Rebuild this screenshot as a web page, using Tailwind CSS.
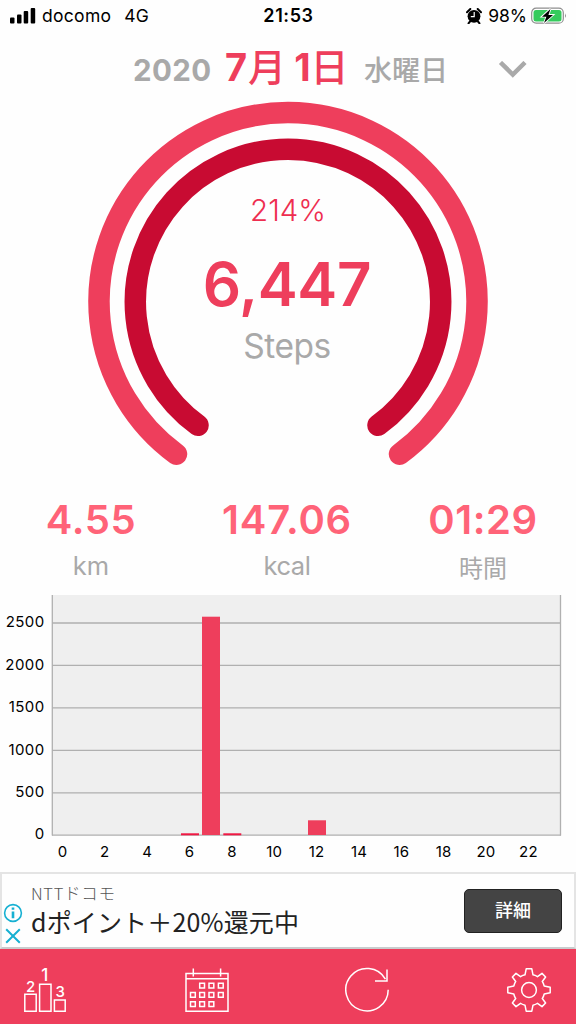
<!DOCTYPE html>
<html lang="ja">
<head>
    <meta charset="UTF-8">
    <meta name="viewport" content="width=device-width, initial-scale=1.0">
    <title>歩数計</title>
    <script src="https://cdn.jsdelivr.net/npm/@tailwindcss/browser@4"></script>
    <style> body { font-family: Inter, 'Noto Sans CJK JP', sans-serif; } </style>
</head>
<body class="w-[576px] h-[1024px] bg-[#fefefe] flex flex-col overflow-hidden whitespace-nowrap">
    <!-- status bar -->
    <div class="h-8 shrink-0 grid grid-cols-3 items-center pl-[10px] pr-[9px] text-[17.5px] leading-8 text-black">
        <div class="flex items-center">
            <svg class="w-[26px] h-4 mr-[6px]" viewBox="0 0 26 16" fill="#000">
                <rect x="0" y="9.5" width="4.5" height="6" rx="1"/>
                <rect x="7" y="6.5" width="4.5" height="9" rx="1"/>
                <rect x="13.7" y="3" width="4.5" height="12.5" rx="1"/>
                <rect x="20.7" y="0" width="4.5" height="15.5" rx="1"/>
            </svg>
            <span class="tracking-[0.3px]">docomo</span>
            <span class="ml-[13px] tracking-[0.2px]">4G</span>
        </div>
        <div class="text-center font-semibold text-[18px] tracking-[0.6px]">21:53</div>
        <div class="flex items-center justify-end">
            <svg class="w-4 h-4 mr-[6px]" viewBox="0 0 16 16">
                <circle cx="8" cy="8.3" r="6.4" fill="#000"/>
                <path d="M1 4.3 4.3 1M15 4.3 11.7 1M4 13.5l-1.5 1.8M12 13.5l1.5 1.8" stroke="#000" stroke-width="2" stroke-linecap="round"/>
                <path d="M8.2 4v4.7H4.8" fill="none" stroke="#fff" stroke-width="1.2"/>
            </svg>
            <span class="mr-1">98%</span>
            <svg class="w-9 h-[18px]" viewBox="0 0 36 18">
                <rect x=".7" y="1.2" width="31.6" height="15" rx="4.5" fill="#fff" stroke="#8e8e8e" stroke-width="1.2"/>
                <rect x="2.5" y="3" width="28" height="11.4" rx="2.5" fill="#35cb5d"/>
                <path d="M34 6.3q1.8 2.3 0 4.8z" fill="#8e8e8e"/>
                <path d="M19.5 2 11 9.7h4.4L13 16l9-8h-4.6z" fill="#000" stroke="#fff" stroke-width="1.8" paint-order="stroke"/>
            </svg>
        </div>
    </div>

    <!-- date -->
    <div class="h-[68px] shrink-0 flex items-baseline pl-[133px] font-bold text-[#a9a9a9] leading-[71px]">
        <span class="w-[92px] text-[29.5px] tracking-[0.4px]">2020</span>
        <span class="w-[139px] text-[38px] text-[#ee3e5c]">7<span class="ml-px font-medium">月</span> <span class="-ml-px">1</span><span class="font-medium">日</span></span>
        <span class="w-[134px] text-[28px] font-medium">水曜日</span>
        <svg class="w-[30px] h-[20px]" viewBox="0 0 30 20" fill="none" stroke="#a9a9a9" stroke-width="4.5">
            <path d="M2.5 1.5 14.8 13.5 27 1.5"/>
        </svg>
    </div>

    <!-- progress rings -->
    <div class="h-[390px] shrink-0 grid justify-items-center">
        <svg class="col-start-1 row-start-1 w-[420px] h-[380px]" viewBox="0 0 420 380" fill="none" stroke-width="21.5" stroke-linecap="round">
            <path d="M98.5 354.2A189 189 0 1 1 321.5 354.2" stroke="#ee3e5c"/>
            <path d="M120 325.3A152.7 152.7 0 1 1 300 325.3" stroke="#c80b32"/>
        </svg>
        <div class="col-start-1 row-start-1 flex flex-col items-center pt-[90px]">
            <div class="h-10 leading-10 text-[29.5px] font-light text-[#ee2e50]">214%</div>
            <div class="h-[72px] mt-[18px] leading-[72px] text-[60px] font-semibold text-[#ee3e5c] tracking-[-0.3px] -translate-x-px">6,447</div>
            <div class="h-[52px] leading-[52px] text-[33.5px] text-[#a9a9a9] tracking-[-0.5px] -translate-x-px">Steps</div>
        </div>
    </div>

    <!-- totals -->
    <div class="h-[105px] shrink-0 flex justify-center text-center pr-[2px]">
        <div class="w-[196px] shrink-0 pt-[6px]">
            <div class="h-12 leading-[48px] text-[40px] font-semibold text-[#ff6378] tracking-[0.6px]">4.55</div>
            <div class="h-11 leading-[44px] text-[25.5px] text-[#a9a9a9]">km</div>
        </div>
        <div class="w-[196px] shrink-0 pt-[6px]">
            <div class="h-12 leading-[48px] text-[40px] font-semibold text-[#ff6378] tracking-[0.8px]">147.06</div>
            <div class="h-11 leading-[44px] text-[25.5px] text-[#a9a9a9] tracking-[-0.4px]">kcal</div>
        </div>
        <div class="w-[196px] shrink-0 pt-[6px]">
            <div class="h-12 leading-[48px] text-[40px] font-semibold text-[#ff6378] tracking-[0.6px]">01:29</div>
            <div class="h-11 leading-[46px] text-[24px] text-[#a9a9a9] font-['Noto_Sans_CJK_JP']">時間</div>
        </div>
    </div>

    <!-- steps per hour -->
    <svg class="w-[576px] h-[277px] shrink-0" viewBox="0 0 576 277">
        <rect x="52" y="0" width="509" height="240" fill="#efefef"/>
        <path d="M52 28h509M52 70.4h509M52 112.8h509M52 155.4h509M52 197.8h509M52 240.2h509" stroke="#b0b0b0" stroke-width="1.3"/>
        <path d="M52.3 0v240.5M560.5 0v240.5" stroke="#b0b0b0" stroke-width="1.3"/>
        <g fill="#ee3e5c">
            <rect x="202" y="21.7" width="18" height="218.3"/>
            <rect x="308" y="225.3" width="18" height="14.7"/>
        </g>
        <g fill="#f01843">
            <rect x="181" y="238.3" width="18" height="2"/>
            <rect x="223.3" y="238.3" width="18" height="2"/>
        </g>
        <g font-size="15" letter-spacing="0.4" text-anchor="end" fill="#000">
            <text x="44.5" y="32">2500</text>
            <text x="44.5" y="74.5">2000</text>
            <text x="44.5" y="117">1500</text>
            <text x="44.5" y="159.5">1000</text>
            <text x="44.5" y="202">500</text>
            <text x="44.5" y="244.2">0</text>
        </g>
        <g font-size="15" letter-spacing="0.2" text-anchor="middle" fill="#000">
            <text x="62.5" y="262">0</text>
            <text x="104.8" y="262">2</text>
            <text x="147.2" y="262">4</text>
            <text x="189.5" y="262">6</text>
            <text x="231.9" y="262">8</text>
            <text x="274.3" y="262">10</text>
            <text x="316.6" y="262">12</text>
            <text x="359" y="262">14</text>
            <text x="401.3" y="262">16</text>
            <text x="443.7" y="262">18</text>
            <text x="486" y="262">20</text>
            <text x="528.4" y="262">22</text>
        </g>
    </svg>

    <!-- ad banner -->
    <div class="h-[77px] shrink-0 flex items-center border-2 border-b-[#c9cccd] border-[#e4e4e4] bg-[#fefefe] pl-[1px] pr-3">
        <svg class="w-5 h-[44px] mt-[28px]" viewBox="0 0 20 44" fill="none" stroke="#16b0d2" stroke-width="1.6">
            <circle cx="10" cy="10" r="8.4"/>
            <path d="M10 8.5v6.8M10 4.6v2.2" stroke-width="2.6"/>
            <path d="m3.2 26.2 13.6 13.6m0-13.6L3.2 39.8" stroke-width="2"/>
        </svg>
        <div class="ml-2 flex-1 -mt-[2px] font-['Noto_Sans_CJK_JP']">
            <div class="h-[22px] leading-[22px] text-[16.5px] font-light text-[#555] tracking-[0.7px]">NTTドコモ</div>
            <div class="h-[34px] leading-[34px] text-[25px] text-[#222] tracking-[0.15px]">dポイント＋20%還元中</div>
        </div>
        <div class="w-[98px] h-11 rounded-[5px] bg-[#444] border border-[#222] text-white text-[18px] font-medium leading-[41px] text-center">詳細</div>
    </div>

    <!-- tab bar -->
    <div class="h-[75px] shrink-0 flex items-center bg-[#ee3e5c] pl-[23px] pt-[7px]">
        <svg class="w-11 h-[46px] overflow-visible" viewBox="0 0 44 46" fill="none" stroke="#fff" stroke-width="1.5">
            <path d="M1.8 27.2h11.4v17H1.8zM16.6 17.3h11.4v26.9H16.6zM31.4 32.9h10.8v11.3H31.4z"/>
            <g fill="#fff" stroke="none" font-size="15" font-weight="500" text-anchor="middle">
                <text x="7.5" y="24.6">2</text>
                <text x="21.7" y="14.3" font-size="17">1</text>
                <text x="37.3" y="30.3">3</text>
            </g>
        </svg>
        <svg class="w-11 h-[46px] ml-[118px]" viewBox="0 0 44 46" fill="none" stroke="#fff" stroke-width="1.5">
            <path d="M1 6.6h42v37.6H1zM1 11.7h42M8.3 1.5v8M35.6 1.5v8"/>
            <path d="M14.7 16.3h4.8v4.8h-4.8zM24 16.3h4.8v4.8H24zM33.4 16.3h4.8v4.8h-4.8zM5.5 25.5h4.8v4.8H5.5zM14.7 25.5h4.8v4.8h-4.8zM24 25.5h4.8v4.8H24zM33.4 25.5h4.8v4.8h-4.8zM5.5 34.7h4.8v4.8H5.5zM14.7 34.7h4.8v4.8h-4.8zM24 34.7h4.8v4.8H24z"/>
        </svg>
        <svg class="w-11 h-[46px] ml-[116px]" viewBox="0 0 44 46" fill="none" stroke="#fff" stroke-width="1.5">
            <path d="M43.2 22.8A21.2 21.2 0 1 1 40.4 12.2"/>
            <path d="M42 2.5v11.6H30"/>
        </svg>
        <svg class="w-[46px] h-[46px] ml-[117px]" viewBox="-23 -23 46 46" fill="none" stroke="#fff" stroke-width="1.5" stroke-linejoin="round">
            <circle r="7.4"/>
            <path d="M-2.8-21.2H2.8L4-15.2Q7.2-14.4 8.5-13.3L13-16.6 16.6-13 13.3-8.5Q14.4-7.2 15.2-4L21.2-2.8V2.8L15.2 4Q14.4 7.2 13.3 8.5L16.6 13 13 16.6 8.5 13.3Q7.2 14.4 4 15.2L2.8 21.2H-2.8L-4 15.2Q-7.2 14.4-8.5 13.3L-13 16.6-16.6 13-13.3 8.5Q-14.4 7.2-15.2 4L-21.2 2.8V-2.8L-15.2-4Q-14.4-7.2-13.3-8.5L-16.6-13-13-16.6-8.5-13.3Q-7.2-14.4-4-15.2Z"/>
        </svg>
    </div>
</body>
</html>
